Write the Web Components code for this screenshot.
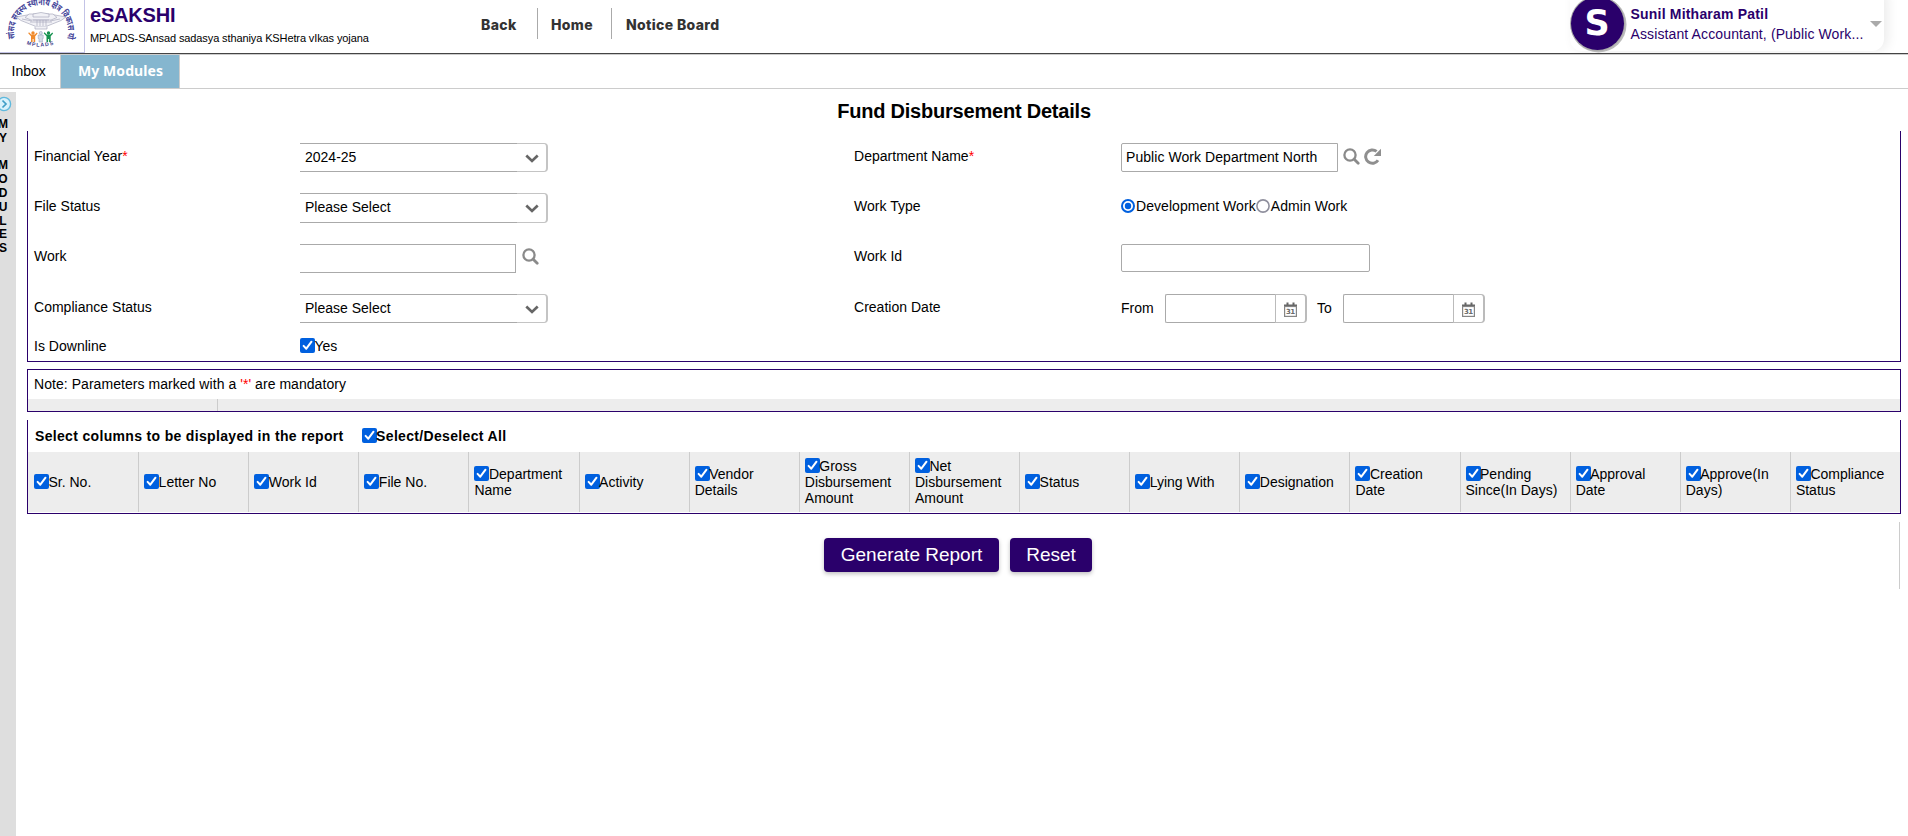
<!DOCTYPE html>
<html lang="en">
<head>
<meta charset="utf-8">
<title>Fund Disbursement Details</title>
<style>
html,body{margin:0;height:100%;background:#fff;overflow:hidden}
body{font:14px/16px "Liberation Sans",Arial,sans-serif;color:#000}
</style>
</head>
<body>
<sakshi-app></sakshi-app>
<script>
const define = (name, css, html) => customElements.define(name, class extends HTMLElement {
  constructor() {
    super();
    const markup = typeof html === 'function' ? html(this) : html;
    this.attachShadow({ mode: 'open' }).innerHTML = `<style>*{box-sizing:border-box}${css}</style>${markup}`;
  }
});

/* ---------- small controls ---------- */
define('check-box',
  `:host{display:inline}
   svg{width:15px;height:15px;vertical-align:-2px;margin-right:-.5px}`,
  `<svg viewBox="0 0 15 15"><rect width="15" height="15" rx="2" fill="#0060df"/><path d="M3.6 7.9l2.7 2.8 5.2-7" fill="none" stroke="#fff" stroke-width="2" stroke-linecap="round" stroke-linejoin="round"/></svg><slot></slot>`);

define('radio-button',
  `:host{display:inline-flex;align-items:center;letter-spacing:.06px}
   svg{width:14px;height:14px;margin-right:1px;flex:none}
   .on{display:none} .off{display:block}
   :host([checked]) .on{display:block} :host([checked]) .off{display:none}`,
  `<svg class="on" viewBox="0 0 14 14"><circle cx="7" cy="7" r="6" fill="#fff" stroke="#0060df" stroke-width="2"/><circle cx="7" cy="7" r="3.2" fill="#0060df"/></svg>
   <svg class="off" viewBox="0 0 14 14"><circle cx="7" cy="7" r="6.1" fill="#fff" stroke="#8f8f9d" stroke-width="1.6"/></svg><slot></slot>`);

define('icon-search',
  `:host{display:block;width:17px;height:17px} svg{display:block}`,
  `<svg width="17" height="17" viewBox="0 0 17 17" fill="none" stroke="#8a8a8a"><circle cx="7" cy="7" r="5.6" stroke-width="2.3"/><path d="M11.2 11.2l4 4" stroke-width="2.8" stroke-linecap="round"/></svg>`);

define('icon-refresh',
  `:host{display:block;width:17px;height:17px} svg{display:block}`,
  `<svg width="17" height="17" viewBox="0 0 17 17"><path d="M14 12.2A6.7 6.7 0 1 1 12.6 3.4" fill="none" stroke="#8f8f8f" stroke-width="3"/><path d="M17 .8V8H9.8z" fill="#8f8f8f"/></svg>`);

define('select-box',
  `:host{display:flex;width:248px;height:29px}
   .v{width:217px;border:1px solid #aaa;border-width:1px 0;line-height:16px;padding:5px 0 0 5px}
   .b{flex:1;margin:-.5px 0 0;border:1px solid #c4c4c4;border-left:0;border-right:2px solid #c4c4c4;border-radius:0 4px 4px 0;display:flex;align-items:center;justify-content:center;padding-top:2px}`,
  `<div class="v"><slot></slot></div><div class="b"><svg width="14" height="9" viewBox="0 0 14 9"><path d="M1.3 1.6L7 7l5.700-5.400" fill="none" stroke="#666" stroke-width="2.700"/></svg></div>`);

define('text-box',
  `:host{display:block;height:29px;border:1px solid #aaa;border-radius:2px;line-height:16px;padding:5px 0 0 4px;letter-spacing:.06px}`,
  `<slot></slot>`);

define('date-box',
  `:host{display:flex;width:142px;height:29px}
   .v{width:110px;border:1px solid #aaa;border-right:0;border-radius:2px 0 0 2px}
   .b{flex:1;border:1px solid #bbb;border-right:2px solid #bbb;border-radius:0 4px 4px 0;display:flex;align-items:center;justify-content:center;padding:2px 1px 0 0}`,
  `<div class="v"></div><div class="b"><svg width="13" height="15" viewBox="0 0 13 15"><path d="M2.500.5h2v2h4v-2h2v2H13V5H0V2.500h2.500z" fill="#666"/><rect x=".6" y="4.500" width="11.800" height="9.900" fill="#fff" stroke="#858585" stroke-width="1.200"/><text x="6.500" y="12.300" text-anchor="middle" font-family="DejaVu Sans" font-size="7" font-weight="700" fill="#6a6a6a" textLength="9">31</text></svg></div>`);

define('push-button',
  `:host{display:block;height:34px;border-radius:4px;background:#2a006b;color:#fff;font-size:19px;line-height:34px;text-align:center;padding-top:0;box-shadow:0 2px 4px rgba(0,0,0,.25)}`,
  `<slot></slot>`);

define('field-label',
  `:host{display:block;padding:17px 0 0 6px;letter-spacing:.02px} .req{display:none;color:#f00} :host([required]) .req{display:inline}`,
  `<slot></slot><span class="req">*</span>`);

/* ---------- header ---------- */
define('site-logo',
  `:host{display:block;width:85px;height:53px;border-right:1px solid #c3c3e6;border-bottom:1px solid #c3c3e6} svg{display:block}`,
  `<svg width="84" height="52" viewBox="0 0 84 52">
    <path id="arc" d="M15 38.500A27 26.500 0 1 1 67.500 37" fill="none"/>
    <text font-family="Noto Sans,Noto Sans Devanagari,sans-serif" font-size="9.500" font-weight="700" fill="#45459a"><textPath href="#arc" textLength="110" lengthAdjust="spacingAndGlyphs">सांसद सदस्य स्थानीय क्षेत्र विकास योजना</textPath></text>
    <g fill="#f1f1f6" stroke="#a9abbd" stroke-width=".7">
      <path d="M16 17q25-6 50 0l-5 3.500-15 6H36l-15-6z"/>
      <path d="M25 17.500l4-3.500h24l4 3.500-6 2.500H31z"/>
      <path d="M33 14q8-3 16 0v3H33zM33 20h16M30 22h22M35 26.500v2.500h12v-2.500"/>
      <path d="M37 20v6M40 20v6M43 20v6M46 20v6M22 19l10 2M60 19l-10 2" fill="none"/>
    </g>
    <g fill="#f08a2c"><circle cx="33" cy="33" r="1.700"/><path d="M29 32.300l2.200 2.200h3.600l2-2 .8.900-2.400 2.800V42h-1.600v-3h-1v3H31v-5.800l-2.800-3z"/></g>
    <g fill="#d5dbe6" stroke="#8e9cba" stroke-width=".5"><circle cx="40.800" cy="33" r="1.600"/><path d="M38.200 35h5v3.500l-.8.200V42h-3.400v-3.300l-.8-.2z"/></g>
    <g fill="#14914e"><circle cx="48.500" cy="33" r="1.700"/><path d="M44.500 32.300l2.200 2.200h3.600l2-2 .8.900-2.400 2.800V42h-1.600v-3h-1v3h-1.600v-5.800l-2.800-3z"/></g>
    <path id="lo" d="M26.500 44.300Q41 49.500 60 42.500" fill="none"/>
    <text font-family="Liberation Sans" font-size="5.200" font-weight="700" fill="#3d3d8c"><textPath href="#lo" textLength="27.500">MPLADS</textPath></text>
  </svg>`);

define('user-card',
  `:host{display:flex;width:314px;height:63px;margin-top:-12px;border-radius:12px;background:#fff;box-shadow:4px 0 12px rgba(0,0,0,.08);align-items:flex-start;color:#2a006b}
   .a{width:53px;height:53px;margin:9px 0 0 .5px;border-radius:50%;background:#2a006b;box-shadow:0 0 0 1px #aaa,1px 1px 0 1.500px #bbb;color:#fff;font:700 35px/53px "DejaVu Sans",sans-serif;text-align:center;flex:none}
   .t{margin:18px 0 0 7px;width:233px;white-space:nowrap}
   b{display:block;letter-spacing:.2px;line-height:16px} span{display:block;margin-top:4px;letter-spacing:.12px}
   i{width:0;height:0;border:6px solid transparent;border-top-color:#aaa;border-bottom:0;margin:33px 0 0 6px}`,
  `<div class="a">S</div><div class="t"><b>Sunil Mitharam Patil</b><span>Assistant Accountant, (Public Work...</span></div><i></i>`);

define('site-header',
  `:host{display:flex;height:55px;border-bottom:1px solid #ccc;box-shadow:inset 0 -1px 0 #444;overflow:hidden}
   .brand{width:363px;padding:4px 0 0 5px;height:50px}
   h1{margin:0;font-size:20px;line-height:23px;color:#2a006b;letter-spacing:-.2px}
   p{margin:4px 0 0;font-size:11px;line-height:14px;letter-spacing:-.11px;white-space:nowrap}
   nav{display:flex;flex:1;margin-top:8px;height:31px;font:800 14px/33px Inter,sans-serif;letter-spacing:.35px;color:#333;padding-left:19px}
   nav span+span{border-left:1px solid #aaa;height:31px}`,
  `<site-logo></site-logo><div class="brand"><h1>eSAKSHI</h1><p>MPLADS-SAnsad sadasya sthaniya KSHetra vIkas yojana</p></div>
   <nav><span style="width:70px;padding-left:14px">Back</span><span style="width:74px;padding-left:13px">Home</span><span style="padding-left:14px">Notice Board</span></nav><user-card></user-card><div style="width:24px"></div>`);

define('module-tabs',
  `:host{display:flex;height:34px;border-bottom:1px solid #ccc;line-height:33px}
   .in{width:60px;padding-left:11.500px}
   .my{width:120px;border:1px solid #ccc;border-width:0 1px;background:#85b6cf;color:#fff;font:700 14px/32px "Noto Sans","Open Sans",sans-serif;text-align:center;padding-left:1px;letter-spacing:.08px}`,
  `<div class="in">Inbox</div><div class="my">My Modules</div>`);

define('side-rail',
  `:host{display:block;width:16px;background:#dedede;overflow:hidden}
   svg{display:block;margin:4px 0 6px -4px}
   div{width:12px;margin-left:-3px;font-weight:700;font-size:12px;line-height:13.800px;text-align:center;display:flex;flex-direction:column;align-items:center}
   span{height:13.800px}`,
  `<svg width="16" height="16" viewBox="0 0 16 16"><circle cx="8" cy="8" r="6.600" fill="#d9f1fb" stroke="#5fb9dd" stroke-width="1.400"/><path d="M6.500 4.500L10 8l-3.500 3.500" fill="none" stroke="#3f9dc6" stroke-width="1.700"/></svg>
   <div>${[...'MY MODULES'].map(c => `<span>${c}</span>`).join('')}</div>`);

/* ---------- report form ---------- */
define('filter-form',
  `:host{display:grid;grid-template-columns:272px 548px 273px 1fr;grid-template-rows:50px 50px 51px 39px 40px;border:1px solid #2a006b;border-top:0;height:231px}
   .c{padding-top:12px;display:flex;align-items:flex-start}
   .low{padding-top:13px} .txt{padding-top:17px}
   .work{width:216px;border-left:0;border-radius:0}`,
  `<field-label required>Financial Year</field-label><div class="c"><select-box>2024-25</select-box></div>
   <field-label required>Department Name</field-label><div class="c"><text-box style="width:217px;border-radius:2px 0 0 2px">Public Work Department North</text-box><icon-search style="margin:5px 0 0 5px"></icon-search><icon-refresh style="margin:5px 0 0 4px"></icon-refresh></div>
   <field-label>File Status</field-label><div class="c"><select-box style="height:30px">Please Select</select-box></div>
   <field-label>Work Type</field-label><div class="c txt"><radio-button checked>Development Work</radio-button><radio-button>Admin Work</radio-button></div>
   <field-label>Work</field-label><div class="c low"><text-box class="work"></text-box><icon-search style="margin:4px 0 0 6px"></icon-search></div>
   <field-label>Work Id</field-label><div class="c low"><text-box style="width:249px;height:28px"></text-box></div>
   <field-label>Compliance Status</field-label><div class="c"><select-box>Please Select</select-box></div>
   <field-label>Creation Date</field-label><div class="c"><span style="width:44px;margin-top:6px">From</span><date-box></date-box><span style="width:36px;padding-left:10px;margin-top:6px">To</span><date-box></date-box></div>
   <field-label>Is Downline</field-label><div class="c txt"><check-box>Yes</check-box></div>`);

define('mandatory-note',
  `:host{display:block;height:43px;border:1px solid #2a006b;margin-top:7px}
   p{margin:0;height:29px;padding:6px 0 0 6px;letter-spacing:.05px} b{font-weight:400;color:#f00}
   .s{height:12px;background:#ededed;display:flex} .s i{width:190px;border-right:1px solid #ccc}`,
  `<p>Note: Parameters marked with a <b>'*'</b> are mandatory</p><div class="s"><i></i></div>`);

const columns = ['Sr. No.', 'Letter No', 'Work Id', 'File No.', 'Department Name', 'Activity', 'Vendor Details', 'Gross Disbursement Amount', 'Net Disbursement Amount', 'Status', 'Lying With', 'Designation', 'Creation Date', 'Pending Since(In Days)', 'Approval Date', 'Approve(In Days)', 'Compliance Status'];
define('column-picker',
  `:host{display:block;height:94px;border:1px solid #2a006b;border-top:0;margin-top:8px}
   .h{height:32px;padding:8px 0 0 7px;font-weight:700;display:flex;letter-spacing:.33px}
   .h check-box{margin-left:18px}
   .g{display:grid;grid-template-columns:repeat(17,1fr);height:60px;background:#ededed}
   .g div{border-left:1px solid #ccc;padding:0 5px 0 5px;display:flex;align-items:center}
   .g div:first-child{border-color:#ededed}`,
  `<div class="h"><span>Select columns to be displayed in the report</span><check-box>Select/Deselect All</check-box></div>
   <div class="g">${columns.map(c => `<div><check-box style="display:block">${c}</check-box></div>`).join('')}</div>`);

define('action-bar',
  `:host{display:flex;justify-content:center;gap:11px;height:67px;margin:8px 1px 0 0;padding:17px 10px 0 0;border-right:1px solid #ccc}
   push-button{margin-top:-1px}`,
  `<push-button style="width:175px">Generate Report</push-button><push-button style="width:82px">Reset</push-button>`);

define('sakshi-app',
  `:host{display:flex;flex-direction:column;height:100vh}
   .m{flex:1;display:flex;padding-top:3px}
   main{flex:1;padding:0 7px 0 11px}
   h2{margin:0;font-size:20px;line-height:23px;padding:8px 0 8px;height:39px;text-align:center;letter-spacing:-.21px}`,
  `<site-header></site-header><module-tabs></module-tabs>
   <div class="m"><side-rail></side-rail><main><h2>Fund Disbursement Details</h2><filter-form></filter-form><mandatory-note></mandatory-note><column-picker></column-picker><action-bar></action-bar></main></div>`);
</script>
</body>
</html>
